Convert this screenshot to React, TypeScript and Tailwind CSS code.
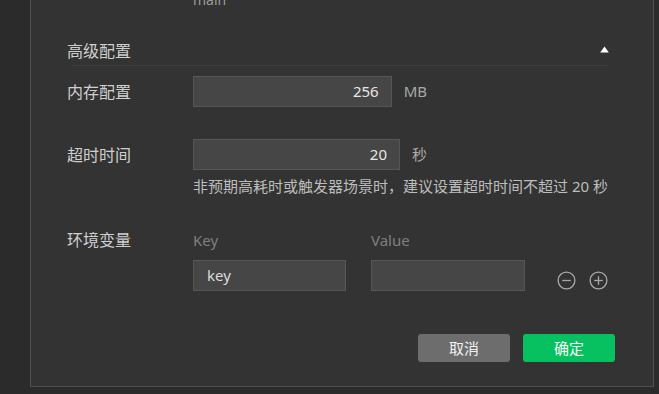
const FONT = '"Noto Sans", "Noto Sans CJK SC", sans-serif'

function CircleIcon({ plus }: { plus?: boolean }) {
  return (
    <svg width="19" height="19" viewBox="0 0 19 19" fill="none" stroke="#a8a8a8" strokeWidth="1.3">
      <circle cx="9.5" cy="9.5" r="8.4" />
      <line x1="5.2" y1="9.5" x2="13.8" y2="9.5" />
      {plus && <line x1="9.5" y1="5.2" x2="9.5" y2="13.8" />}
    </svg>
  )
}

function UnitInput({ value, unit }: { value: string; unit: string }) {
  return (
    <div className="flex items-center w-[234px] gap-[12px]">
      <div className="flex-1 h-[31px] bg-[#464646] border border-[#565656] flex items-center justify-end pr-[12px] text-[15px] text-[#e6e6e6]">
        {value}
      </div>
      <span className="text-[15px] text-[#a9a9a9]">{unit}</span>
    </div>
  )
}

export default function App() {
  return (
    <div
      className="w-[659px] h-[394px] bg-[#2b2b2b] overflow-hidden pl-[30px] pr-[5px]"
      style={{ fontFamily: FONT }}
    >
      <div className="-mt-[20px] h-[407px] bg-[#333333] border border-[#4f4f4f] pl-[36px] pr-[38px] flex flex-col">
        {/* tail of the section above */}
        <div className="mt-[9px] h-[20px] leading-[20px] pl-[126px] text-[14px] text-[#9c9c9c]">main</div>

        {/* advanced settings header */}
        <div className="mt-[26px] h-[29px] flex items-center justify-between pr-[6px]">
          <span className="text-[16px] text-[#cfcfcf]">高级配置</span>
          <svg width="9" height="7" viewBox="0 0 9 7" className="-mt-[3px]">
            <polygon points="4.5,0.5 8.8,6.5 0.2,6.5" fill="#ffffff" />
          </svg>
        </div>
        <div className="ml-[4px] mr-[7px] h-px bg-[#3e3e3e]" />

        <div className="mt-[10px] flex items-center">
          <span className="w-[126px] text-[16px] text-[#cfcfcf]">内存配置</span>
          <UnitInput value="256" unit="MB" />
        </div>

        <div className="mt-[32px] flex items-center">
          <span className="w-[126px] text-[16px] text-[#cfcfcf]">超时时间</span>
          <UnitInput value="20" unit="秒" />
        </div>
        <p className="mt-[6px] ml-[126px] h-[20px] leading-[20px] text-[15px] text-[#bdbdbd] whitespace-nowrap">
          非预期高耗时或触发器场景时，建议设置超时时间不超过 20 秒
        </p>

        <div className="mt-[34px] flex">
          <span className="w-[126px] h-[20px] leading-[20px] text-[16px] text-[#cfcfcf]">环境变量</span>
          <div className="flex flex-col">
            <div className="flex gap-[25px] h-[20px] leading-[20px] text-[15px] text-[#7f7f7f]">
              <span className="w-[153px]">Key</span>
              <span className="w-[154px]">Value</span>
            </div>
            <div className="mt-[10px] flex">
              <div className="w-[153px] h-[31px] bg-[#464646] border border-[#565656] flex items-center pl-[13px] text-[15px] text-[#dcdcdc]">
                key
              </div>
              <div className="ml-[25px] w-[154px] h-[31px] bg-[#464646] border border-[#565656]" />
              <div className="ml-[32px] mt-[11px] flex gap-[13px]">
                <CircleIcon />
                <CircleIcon plus />
              </div>
            </div>
          </div>
        </div>

        <div className="mt-[43px] flex justify-end gap-[13px]">
          <button className="w-[92px] h-[28px] rounded-[3px] bg-[#6d6d6d] text-[15px] text-[#f0f0f0]">取消</button>
          <button className="w-[92px] h-[28px] rounded-[3px] bg-[#07c160] text-[15px] text-white">确定</button>
        </div>
      </div>
    </div>
  )
}
